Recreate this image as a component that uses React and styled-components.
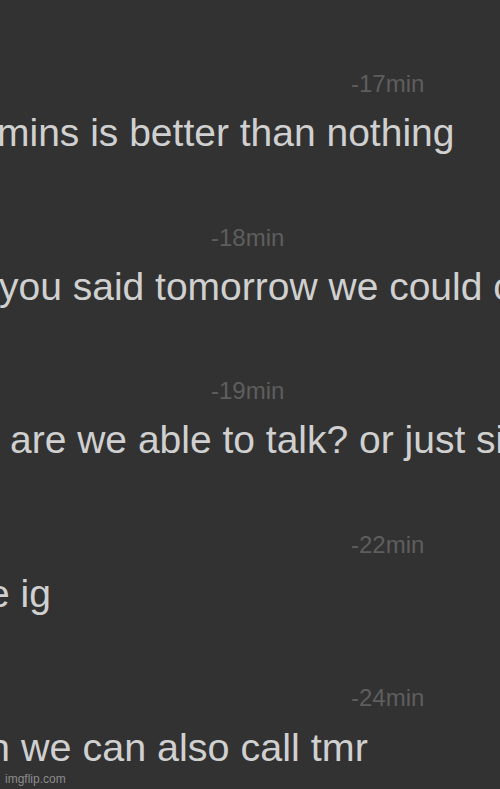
import React from "react";
import styled, { createGlobalStyle } from "styled-components";

const messages = [
    { time: "-17min", timeLeft: 351, text: "mins is better than nothing", textLeft: -3 },
    { time: "-18min", timeLeft: 211, text: "you said tomorrow we could call", textLeft: -1 },
    { time: "-19min", timeLeft: 211, text: "are we able to talk? or just sit in call", textLeft: 10 },
    { time: "-22min", timeLeft: 351, text: "e ig", textLeft: -12 },
    { time: "-24min", timeLeft: 351, text: "h we can also call tmr", textLeft: -12, size: 39.5 },
];

const App = () => {
    return (
        <>
            <GlobalStyle />
            <Screen>
                <Thread>
                    {messages.map((msg) => (
                        <Row key={msg.time}>
                            <Time left={msg.timeLeft}>{msg.time}</Time>
                            <Text left={msg.textLeft} size={msg.size}>
                                {msg.text}
                            </Text>
                        </Row>
                    ))}
                </Thread>
                <Watermark>imgflip.com</Watermark>
            </Screen>
        </>
    );
};

export default App;

const GlobalStyle = createGlobalStyle`
    html, body {
        margin: 0;
        padding: 0;
        background: #323232;
    }
`;

const Screen = styled.div`
    position: relative;
    width: 500px;
    height: 789px;
    overflow: hidden;
    background: #323232;
    font-family: "Liberation Sans", Arial, sans-serif;
`;

const Thread = styled.div`
    display: flex;
    flex-direction: column;
    gap: 67.5px;
    padding-top: 70px;
`;

const Row = styled.div`
    display: flex;
    flex-direction: column;
    gap: 12px;
`;

const Time = styled.span`
    margin-left: ${({ left }) => left}px;
    font-size: 24px;
    line-height: 28px;
    color: #5e5e5e;
    white-space: nowrap;
`;

const Text = styled.span`
    margin-left: ${({ left }) => left}px;
    font-size: ${({ size }) => size || 39}px;
    line-height: 46px;
    color: #d0d0d0;
    white-space: nowrap;
`;

const Watermark = styled.span`
    position: absolute;
    left: 5px;
    bottom: 3px;
    font-size: 12px;
    color: #8c8c8c;
`;
